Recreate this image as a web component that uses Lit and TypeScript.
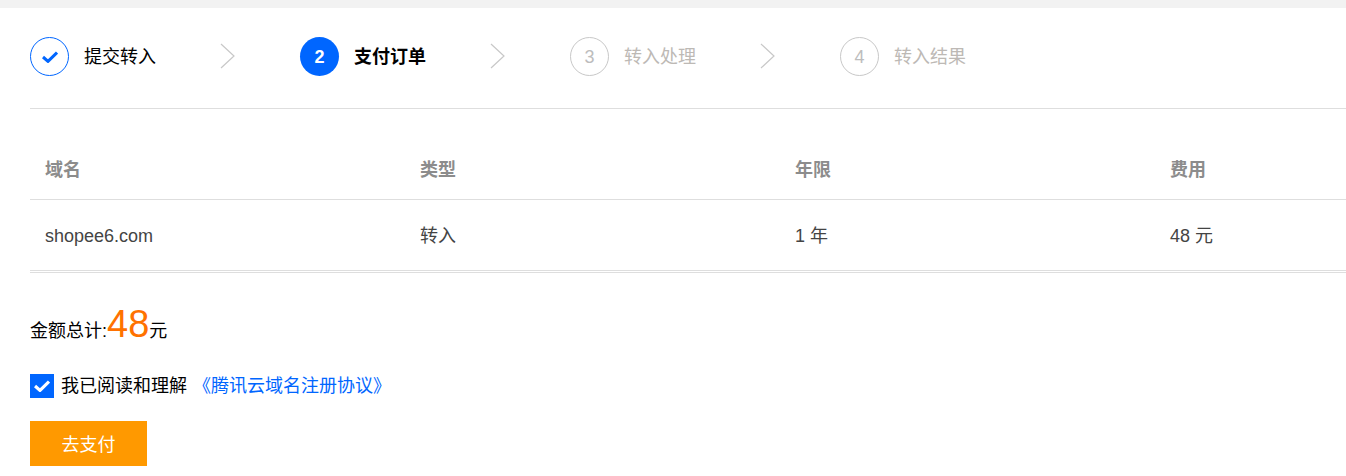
import { LitElement, html, css, svg } from "lit";
import { customElement } from "lit/decorators.js";

const steps = [
  { n: "", label: "提交转入", state: "done" },
  { n: "2", label: "支付订单", state: "current" },
  { n: "3", label: "转入处理", state: "todo" },
  { n: "4", label: "转入结果", state: "todo" },
];

const columns = ["域名", "类型", "年限", "费用"];
const row = ["shopee6.com", "转入", "1 年", "48 元"];

@customElement("app-root")
export class AppRoot extends LitElement {
  static styles = css`
    :host {
      display: block;
      font-family: "Liberation Sans", "Noto Sans CJK SC", sans-serif;
      font-size: 18px;
      line-height: 24px;
      color: #000;
      background: #fff;
      height: 476px;
      overflow: hidden;
    }
    .topbar { height: 8px; background: #f2f2f2; }
    .main { padding-left: 30px; }
    .steps {
      display: flex;
      padding-top: 29px;
      height: 71px;
      border-bottom: 1px solid #dedede;
    }
    .step {
      width: 270px;
      height: 39px;
      display: flex;
      align-items: center;
      position: relative;
      flex: none;
    }
    .circle {
      width: 39px;
      height: 39px;
      box-sizing: border-box;
      border-radius: 50%;
      display: flex;
      align-items: center;
      justify-content: center;
      font-size: 18px;
      font-weight: 700;
      margin-right: 15px;
      flex: none;
    }
    .done .circle { border: 1px solid #0066ff; }
    .current .circle { background: #0066ff; color: #fff; }
    .todo .circle { border: 1px solid #c8c8c8; color: #bdbdbd; font-weight: 400; }
    .current .label { font-weight: 700; }
    .todo .label { color: #bdb9b5; }
    .chev { position: absolute; left: 190px; top: 6px; }
    table {
      width: 1500px;
      border-collapse: collapse;
      table-layout: fixed;
      margin-top: 31px;
    }
    th, td {
      width: 375px;
      padding: 2px 15px 0;
      text-align: left;
      box-sizing: border-box;
    }
    th {
      height: 59px;
      color: #8c8c8c;
      font-weight: 700;
      font-size: 18px;
      border-bottom: 1px solid #dedede;
    }
    td {
      height: 71px;
      color: #444;
      font-size: 18px;
    }
    .rule {
      height: 3px;
      box-sizing: border-box;
      border-top: 1px solid #dedede;
      border-bottom: 1px solid #dedede;
    }
    .total {
      display: flex;
      align-items: baseline;
      height: 40px;
      margin-top: 31px;
    }
    .amount {
      font-size: 38px;
      color: #ff7200;
      line-height: 40px;
    }
    .agree {
      display: flex;
      align-items: center;
      margin-top: 30px;
      height: 24px;
    }
    .check {
      width: 24px;
      height: 24px;
      background: #0066ff;
      display: flex;
      align-items: center;
      justify-content: center;
      margin-right: 7px;
      flex: none;
    }
    .link { color: #0066ff; margin-left: 6px; }
    .btn {
      display: flex;
      align-items: center;
      justify-content: center;
      margin-top: 23px;
      padding-top: 2px;
      box-sizing: border-box;
      width: 117px;
      height: 45px;
      background: #ff9900;
      color: #fff;
      font-size: 18px;
    }
  `;

  private tick(w: number, h: number, sw: number, color: string) {
    return svg`<svg width=${w} height=${h} viewBox="0 0 16 12"><path d="M1 6 L6 10.4 L15 1.6" fill="none" stroke=${color} stroke-width=${sw}/></svg>`;
  }

  render() {
    return html`
      <div class="topbar"></div>
      <div class="main">
        <div class="steps">
          ${steps.map(
            (s, i) => html`
              <div class="step ${s.state}">
                <span class="circle">${s.state === "done" ? this.tick(16, 12, 3, "#0066ff") : s.n}</span>
                <span class="label">${s.label}</span>
                ${i < 3
                  ? svg`<svg class="chev" width="15" height="26" viewBox="0 0 15 26"><path d="M1 1 L14 13 L1 25" fill="none" stroke="#c8c8c8" stroke-width="1.2"/></svg>`
                  : ""}
              </div>
            `
          )}
        </div>
        <table>
          <thead><tr>${columns.map((c) => html`<th>${c}</th>`)}</tr></thead>
          <tbody><tr>${row.map((c) => html`<td>${c}</td>`)}</tr></tbody>
        </table>
        <div class="rule"></div>
        <div class="total"><span>金额总计:</span><span class="amount">48</span><span>元</span></div>
        <div class="agree">
          <span class="check">${this.tick(16, 12, 3.2, "#fff")}</span>
          <span>我已阅读和理解</span>
          <span class="link">《腾讯云域名注册协议》</span>
        </div>
        <div class="btn">去支付</div>
      </div>
    `;
  }
}
